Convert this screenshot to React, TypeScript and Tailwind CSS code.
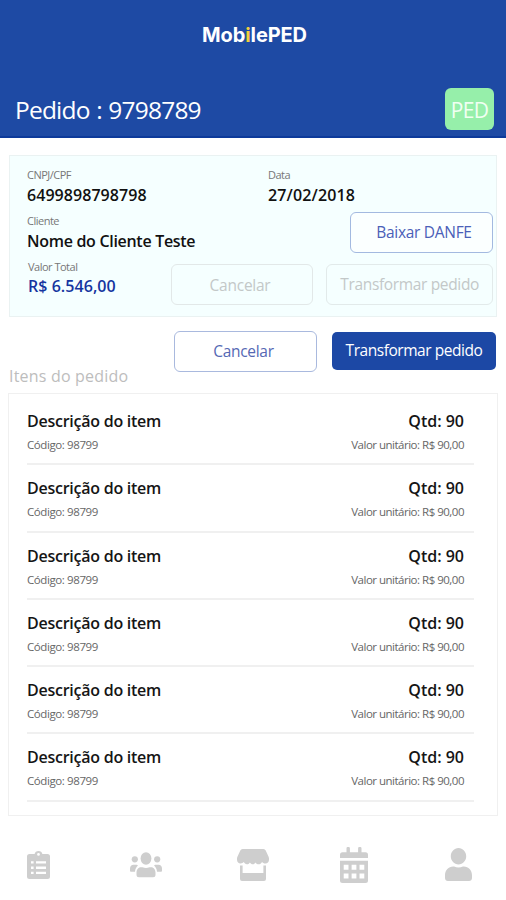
import type { SVGProps } from 'react'
import { FaUser } from 'react-icons/fa'

interface OrderItem {
  description: string
  code: string
  quantity: number
  unitPrice: string
}

const items: OrderItem[] = Array.from({ length: 6 }, () => ({
  description: 'Descrição do item',
  code: '98799',
  quantity: 90,
  unitPrice: 'R$ 90,00'
}))

type IconProps = SVGProps<SVGSVGElement>

function ClipboardIcon(props: IconProps) {
  return (
    <svg viewBox="0 0 23 29" fill="currentColor" {...props}>
      <path
        fillRule="evenodd"
        d="M2.5 4H7.6a4 4 0 0 1 7.8 0h5.1A2.5 2.5 0 0 1 23 6.5V26.5A2.5 2.5 0 0 1 20.5 29H2.5A2.5 2.5 0 0 1 0 26.5V6.5A2.5 2.5 0 0 1 2.5 4ZM11.5 3a1.4 1.4 0 1 0 0 2.8a1.4 1.4 0 0 0 0-2.8ZM4 11.2v2.4h2.6v-2.4ZM9 11.2v2.4h10v-2.4ZM4 16.5v2.4h2.6v-2.4ZM9 16.5v2.4h10v-2.4ZM4 21.7v2.4h2.6v-2.4ZM9 21.7v2.4h10v-2.4Z"
      />
    </svg>
  )
}

function UsersIcon(props: IconProps) {
  return (
    <svg viewBox="0 0 32 26" fill="currentColor" {...props}>
      <ellipse cx="16" cy="6.5" rx="5.4" ry="6.2" />
      <circle cx="4.8" cy="7.3" r="3.1" />
      <circle cx="27.2" cy="7.3" r="3.1" />
      <path d="M11 15.2h1.5q3.5 1.5 7 0H21c3 0 4.5 2.5 4.5 5.5v2a2.5 2.5 0 0 1-2.5 2.5H9a2.5 2.5 0 0 1-2.5-2.5v-2c0-3 1.5-5.5 4.500-5.5Z" />
      <path d="M3.5 12.8h3.2l1.3.8c-1.8 1.6-2.8 3.500-3 6.200H1.200C.4 19.800 0 19.300 0 18.500v-2c0-2.200 1.500-3.700 3.500-3.700ZM28.500 12.800h-3.200l-1.300.8c1.800 1.600 2.800 3.500 3 6.200h3.800c.8 0 1.200-.5 1.200-1.300v-2c0-2.200-1.500-3.700-3.500-3.700Z" />
    </svg>
  )
}

function StoreIcon(props: IconProps) {
  return (
    <svg viewBox="0 0 32 32" fill="currentColor" {...props}>
      <path d="M5.5 0h21q1.5 0 2.2 1.5l3 6.5c1 3-.2 6.5-3.2 6.5-1.7 0-2.8-.9-3.5-1.6-.8 1.3-2 2.4-3.4 2.4s-2.6-.9-3.3-1.900c-.7 1.200-1.400 1.900-2.500 1.900s-2.200-.8-2.900-1.900c-.8 1.200-1.800 1.900-3.100 1.900s-2.400-1-3-2.200c-.8.8-1.800 1.400-3.300 1.400C.5 14.500-.7 11 .3 8l3-6.500Q4 0 5.500 0Z" />
      <path d="M3 16.5h2.6V24h20.8v-7.5H29V30a2 2 0 0 1-2 2H5a2 2 0 0 1-2-2Z" />
    </svg>
  )
}

function CalendarIcon(props: IconProps) {
  return (
    <svg viewBox="0 0 28 36" fill="currentColor" {...props}>
      <path d="M2.5 5.2H6.5V1.2q0-1.2 1.2-1.2h1q1.2 0 1.2 1.2v4h8.2v-4q0-1.2 1.2-1.2h1q1.2 0 1.2 1.2v4h4q2.5 0 2.5 2.5v3.4H0V7.7q0-2.5 2.5-2.5Z" />
      <path
        fillRule="evenodd"
        d="M0 13.8h28V33.5a2.5 2.5 0 0 1-2.5 2.5h-23A2.5 2.5 0 0 1 0 33.5ZM3.7 17.7v5h4.8v-5ZM11.6 17.7v5h4.8v-5ZM19.5 17.7v5h4.8v-5ZM3.7 26.4v5h4.8v-5ZM11.6 26.4v5h4.8v-5ZM19.5 26.4v5h4.8v-5Z"
      />
    </svg>
  )
}

function Header() {
  return (
    <header className="h-[138px] bg-[#1e4aa4] border-b-2 border-[#0d3a9a] text-white flex flex-col justify-between">
      <h1 className="mt-[21px] pl-[3px] text-center font-['Inter'] font-bold text-[20px] leading-7 tracking-[-0.1px]">
        Mob<span className="text-[#f0cf3c]">i</span>lePED
      </h1>
      <div className="flex items-center justify-between pl-[15px] pr-3 pb-[6px]">
        <h2 className="mt-[2px] text-[24.5px] leading-8 font-medium tracking-[-0.8px] [word-spacing:1px]">Pedido : 9798789</h2>
        <span className="w-[49px] h-[42px] pt-[3px] rounded-md bg-[#96efaa] text-[#f0fff2] flex items-center justify-center text-[21px] tracking-[-0.6px]">
          PED
        </span>
      </div>
    </header>
  )
}

function Field({ label, value, className = 'text-[#111]' }: { label: string; value: string; className?: string }) {
  return (
    <div className="h-[46px]">
      <p className="text-[11px] leading-4 tracking-[-0.5px] text-[#777]">{label}</p>
      <p className={`text-[16px] leading-[23px] font-semibold whitespace-nowrap ${className}`}>{value}</p>
    </div>
  )
}

function OrderCard() {
  return (
    <section className="mx-[9px] mt-[17px] h-[162px] pl-[17px] pr-[3px] pt-[11px] bg-[#f5ffff] border border-[#eaf2f2]">
      <div className="flex">
        <div className="w-[241px]">
          <Field label="CNPJ/CPF" value="6499898798798" className="pt-px text-[#111] tracking-[0.05px]" />
        </div>
        <Field label="Data" value="27/02/2018" className="pt-px text-[#111] tracking-[0.15px]" />
      </div>
      <div className="flex justify-between">
        <Field label="Cliente" value="Nome do Cliente Teste" className="pt-px text-[#111] tracking-[-0.3px]" />
        <button className="w-[143px] h-[41px] -mt-px pl-[5px] rounded-md border border-[#a3b9e0] bg-[#fbffff] text-[#4a60b8] text-[15.5px] tracking-[-0.3px]">
          Baixar DANFE
        </button>
      </div>
      <div className="flex">
        <div className="w-[144px] pl-px">
          <Field label="Valor Total" value="R$ 6.546,00" className="text-[#1535a0] tracking-[0.05px]" />
        </div>
        <button className="w-[143px] h-[41px] mt-[5px] pr-1 pt-[2px] rounded-md border border-[#e2e8e8] text-[#c3c8c8] text-[15.5px] tracking-[-0.25px]" disabled>
          Cancelar
        </button>
        <button className="w-[167px] h-[41px] mt-[5px] ml-[13px] rounded-md border border-[#e2eaea] text-[#c3c8c8] text-[15.5px] tracking-[-0.35px] whitespace-nowrap" disabled>
          Transformar pedido
        </button>
      </div>
    </section>
  )
}

function ItemRow({ item }: { item: OrderItem }) {
  return (
    <li className="h-[67.3px] pr-[10px] pt-[11px] border-b-2 border-[#f0f0f0]">
      <div className="flex justify-between text-[16px] leading-6 font-semibold text-[#151515]">
        <span className="tracking-[-0.25px]">{item.description}</span>
        <span>Qtd: {item.quantity}</span>
      </div>
      <div className="mt-[2px] flex justify-between text-[11.5px] leading-5 tracking-[-0.5px] text-[#666]">
        <span className="tracking-[-0.4px]">Código: {item.code}</span>
        <span>Valor unitário: {item.unitPrice}</span>
      </div>
    </li>
  )
}

export default function App() {
  return (
    <div className="w-[506px] h-[900px] bg-white overflow-hidden flex flex-col font-['Open_Sans','Noto_Sans',sans-serif]">
      <Header />
      <OrderCard />

      <div className="h-[76px] pl-[9px] pr-[10px] flex justify-between">
        <h3 className="mt-[47px] text-[16px] leading-6 tracking-[0.2px] text-[#bdbdbd]">Itens do pedido</h3>
        <div className="flex gap-[15px] pt-[14px]">
          <button className="w-[143px] h-[41px] pr-1 rounded-md border border-[#a9b9de] text-[#5568b4] text-[15.5px] tracking-[-0.3px]">
            Cancelar
          </button>
          <button className="w-[164px] h-[38px] mt-px rounded-[5px] bg-[#1c48a5] text-white text-[15.5px] font-medium tracking-[-0.45px] whitespace-nowrap">
            Transformar pedido
          </button>
        </div>
      </div>

      <ul className="mx-2 h-[423px] pl-[18px] pr-[23px] pt-[4px] border border-[#f0f0f0]">
        {items.map((item, index) => (
          <ItemRow key={index} item={item} />
        ))}
      </ul>

      <nav className="flex-1 pl-[27px] pr-[34px] pb-[14px] flex items-center justify-between pt-[27px] text-[#cecece]">
        <button aria-label="Pedidos">
          <ClipboardIcon className="w-[23px] h-[29px]" />
        </button>
        <button aria-label="Clientes" className="ml-[9px]">
          <UsersIcon className="w-[32px] h-[26px]" />
        </button>
        <button aria-label="Loja" className="ml-[3px]">
          <StoreIcon className="w-[32px] h-[32px]" />
        </button>
        <button aria-label="Agenda" className="mr-[6px]">
          <CalendarIcon className="w-[28px] h-[36px]" />
        </button>
        <button aria-label="Perfil">
          <FaUser className="w-[27px] h-[33px]" preserveAspectRatio="none" />
        </button>
      </nav>
    </div>
  )
}
